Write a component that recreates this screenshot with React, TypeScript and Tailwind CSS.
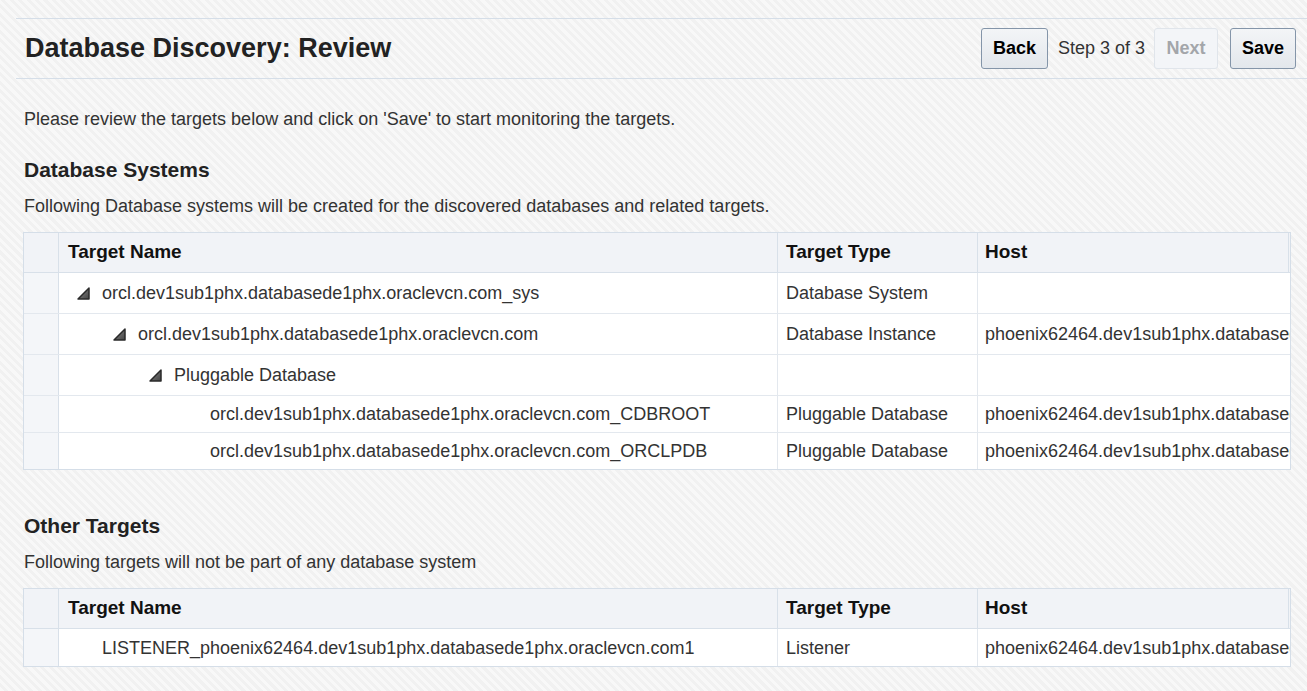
import React from "react";

type Row = { name: string; level: number; expandable: boolean; type: string; host: string; h: number };

const HOST = "phoenix62464.dev1sub1phx.databasede1phx.oraclevcn.com";

const dbRows: Row[] = [
  { name: "orcl.dev1sub1phx.databasede1phx.oraclevcn.com_sys", level: 0, expandable: true, type: "Database System", host: "", h: 41 },
  { name: "orcl.dev1sub1phx.databasede1phx.oraclevcn.com", level: 1, expandable: true, type: "Database Instance", host: HOST, h: 41 },
  { name: "Pluggable Database", level: 2, expandable: true, type: "", host: "", h: 41 },
  { name: "orcl.dev1sub1phx.databasede1phx.oraclevcn.com_CDBROOT", level: 3, expandable: false, type: "Pluggable Database", host: HOST, h: 37 },
  { name: "orcl.dev1sub1phx.databasede1phx.oraclevcn.com_ORCLPDB", level: 3, expandable: false, type: "Pluggable Database", host: HOST, h: 37 },
];

const otherRows: Row[] = [
  { name: "LISTENER_phoenix62464.dev1sub1phx.databasede1phx.oraclevcn.com1", level: 0, expandable: false, type: "Listener", host: HOST, h: 38 },
];

function Tri() {
  return (
    <svg width="13" height="13" viewBox="0 0 13 13" className="shrink-0">
      <defs>
        <linearGradient id="tg" x1="0" y1="0" x2="1" y2="1">
          <stop offset="0" stopColor="#8a8a8a" />
          <stop offset="1" stopColor="#444" />
        </linearGradient>
      </defs>
      <polygon points="1,12 12,1 12,12" fill="url(#tg)" stroke="#2a2a2a" strokeWidth="1.5" strokeLinejoin="round" />
    </svg>
  );
}

function Table({ rows }: { rows: Row[] }) {
  return (
    <div className="w-[1268px] border border-[#d5dee8] bg-white">
      <div className="grid grid-cols-[35px_719px_200px_1fr] h-[40px] bg-[#f1f3f7] border-b border-[#d8e0e9] text-[19px] font-bold text-[#111]">
        <div className="border-r border-[#d8e0e9]" />
        <div className="border-r border-[#d8e0e9] pl-[9px] flex items-center">Target Name</div>
        <div className="border-r border-[#d8e0e9] pl-[8px] flex items-center">Target Type</div>
        <div className="border-r border-[#d8e0e9] mr-[1px] pl-[7px] flex items-center">Host</div>
      </div>
      {rows.map((r, i) => (
        <div
          key={i}
          className={`grid grid-cols-[35px_719px_200px_1fr] text-[18px] text-[#333] ${i < rows.length - 1 ? "border-b border-[#e3e8ee]" : ""}`}
          style={{ height: i < rows.length - 1 ? r.h : r.h - 1 }}
        >
          <div className="bg-[#f4f6f9] border-r border-[#d8e0e9]" />
          <div className="border-r border-[#e3e8ee] flex items-center pt-[1px] whitespace-nowrap" style={{ paddingLeft: 18 + 36 * r.level }}>
            <span className="w-[25px] flex items-center">{r.expandable ? <Tri /> : null}</span>
            <span>{r.name}</span>
          </div>
          <div className="border-r border-[#e3e8ee] pl-[8px] flex items-center pt-[1px] whitespace-nowrap">{r.type}</div>
          <div className="pl-[7px] flex items-center pt-[1px] whitespace-nowrap overflow-hidden">{r.host}</div>
        </div>
      ))}
    </div>
  );
}

function Btn({ children, disabled, w }: { children: React.ReactNode; disabled?: boolean; w: string }) {
  return (
    <button
      className={`${w} h-[41px] rounded-[3px] text-[18px] font-bold flex items-center justify-center ${
        disabled
          ? "border border-[#e0e5eb] bg-[#f3f5f8] text-[#a3a6aa]"
          : "border border-[#8495a9] bg-[linear-gradient(#f3f5f7,#e3e7ec)] text-black"
      }`}
    >
      {children}
    </button>
  );
}

export default function App() {
  return (
    <div
      className="min-h-[691px] w-full overflow-hidden bg-[image:repeating-linear-gradient(45deg,#f8f8f8_0px,#f8f8f8_3px,#f1f1f1_3px,#f1f1f1_6px)] text-[#333]"
      style={{ fontFamily: '"Liberation Sans", Arial, sans-serif' }}
    >
      <div className="h-[18px]" />
      <div className="ml-[16px] h-[61px] border-y border-[#d5dee8] flex items-center justify-between pl-[9px] pr-[11px]">
        <h1 className="text-[27px] font-bold text-[#222] leading-none">Database Discovery: Review</h1>
        <div className="flex items-center">
          <Btn w="w-[67px]">Back</Btn>
          <span className="ml-[10px] text-[18px] text-[#333]">Step 3 of 3</span>
          <div className="ml-[9px]">
            <Btn w="w-[64px]" disabled>Next</Btn>
          </div>
          <div className="ml-[12px]">
            <Btn w="w-[66px]">Save</Btn>
          </div>
        </div>
      </div>
      <div className="pl-[23px]">
        <p className="mt-[28px] text-[18px] leading-[24px] pl-[1px]">
          Please review the targets below and click on 'Save' to start monitoring the targets.
        </p>
        <h2 className="mt-[26px] text-[21px] font-bold leading-[26px] text-[#222] pl-[1px]">Database Systems</h2>
        <p className="mt-[11px] text-[18px] leading-[24px] pl-[1px]">
          Following Database systems will be created for the discovered databases and related targets.
        </p>
        <div className="mt-[14px]">
          <Table rows={dbRows} />
        </div>
        <h2 className="mt-[43px] text-[21px] font-bold leading-[26px] text-[#222] pl-[1px]">Other Targets</h2>
        <p className="mt-[11px] text-[18px] leading-[24px] pl-[1px]">
          Following targets will not be part of any database system
        </p>
        <div className="mt-[14px]">
          <Table rows={otherRows} />
        </div>
      </div>
    </div>
  );
}
